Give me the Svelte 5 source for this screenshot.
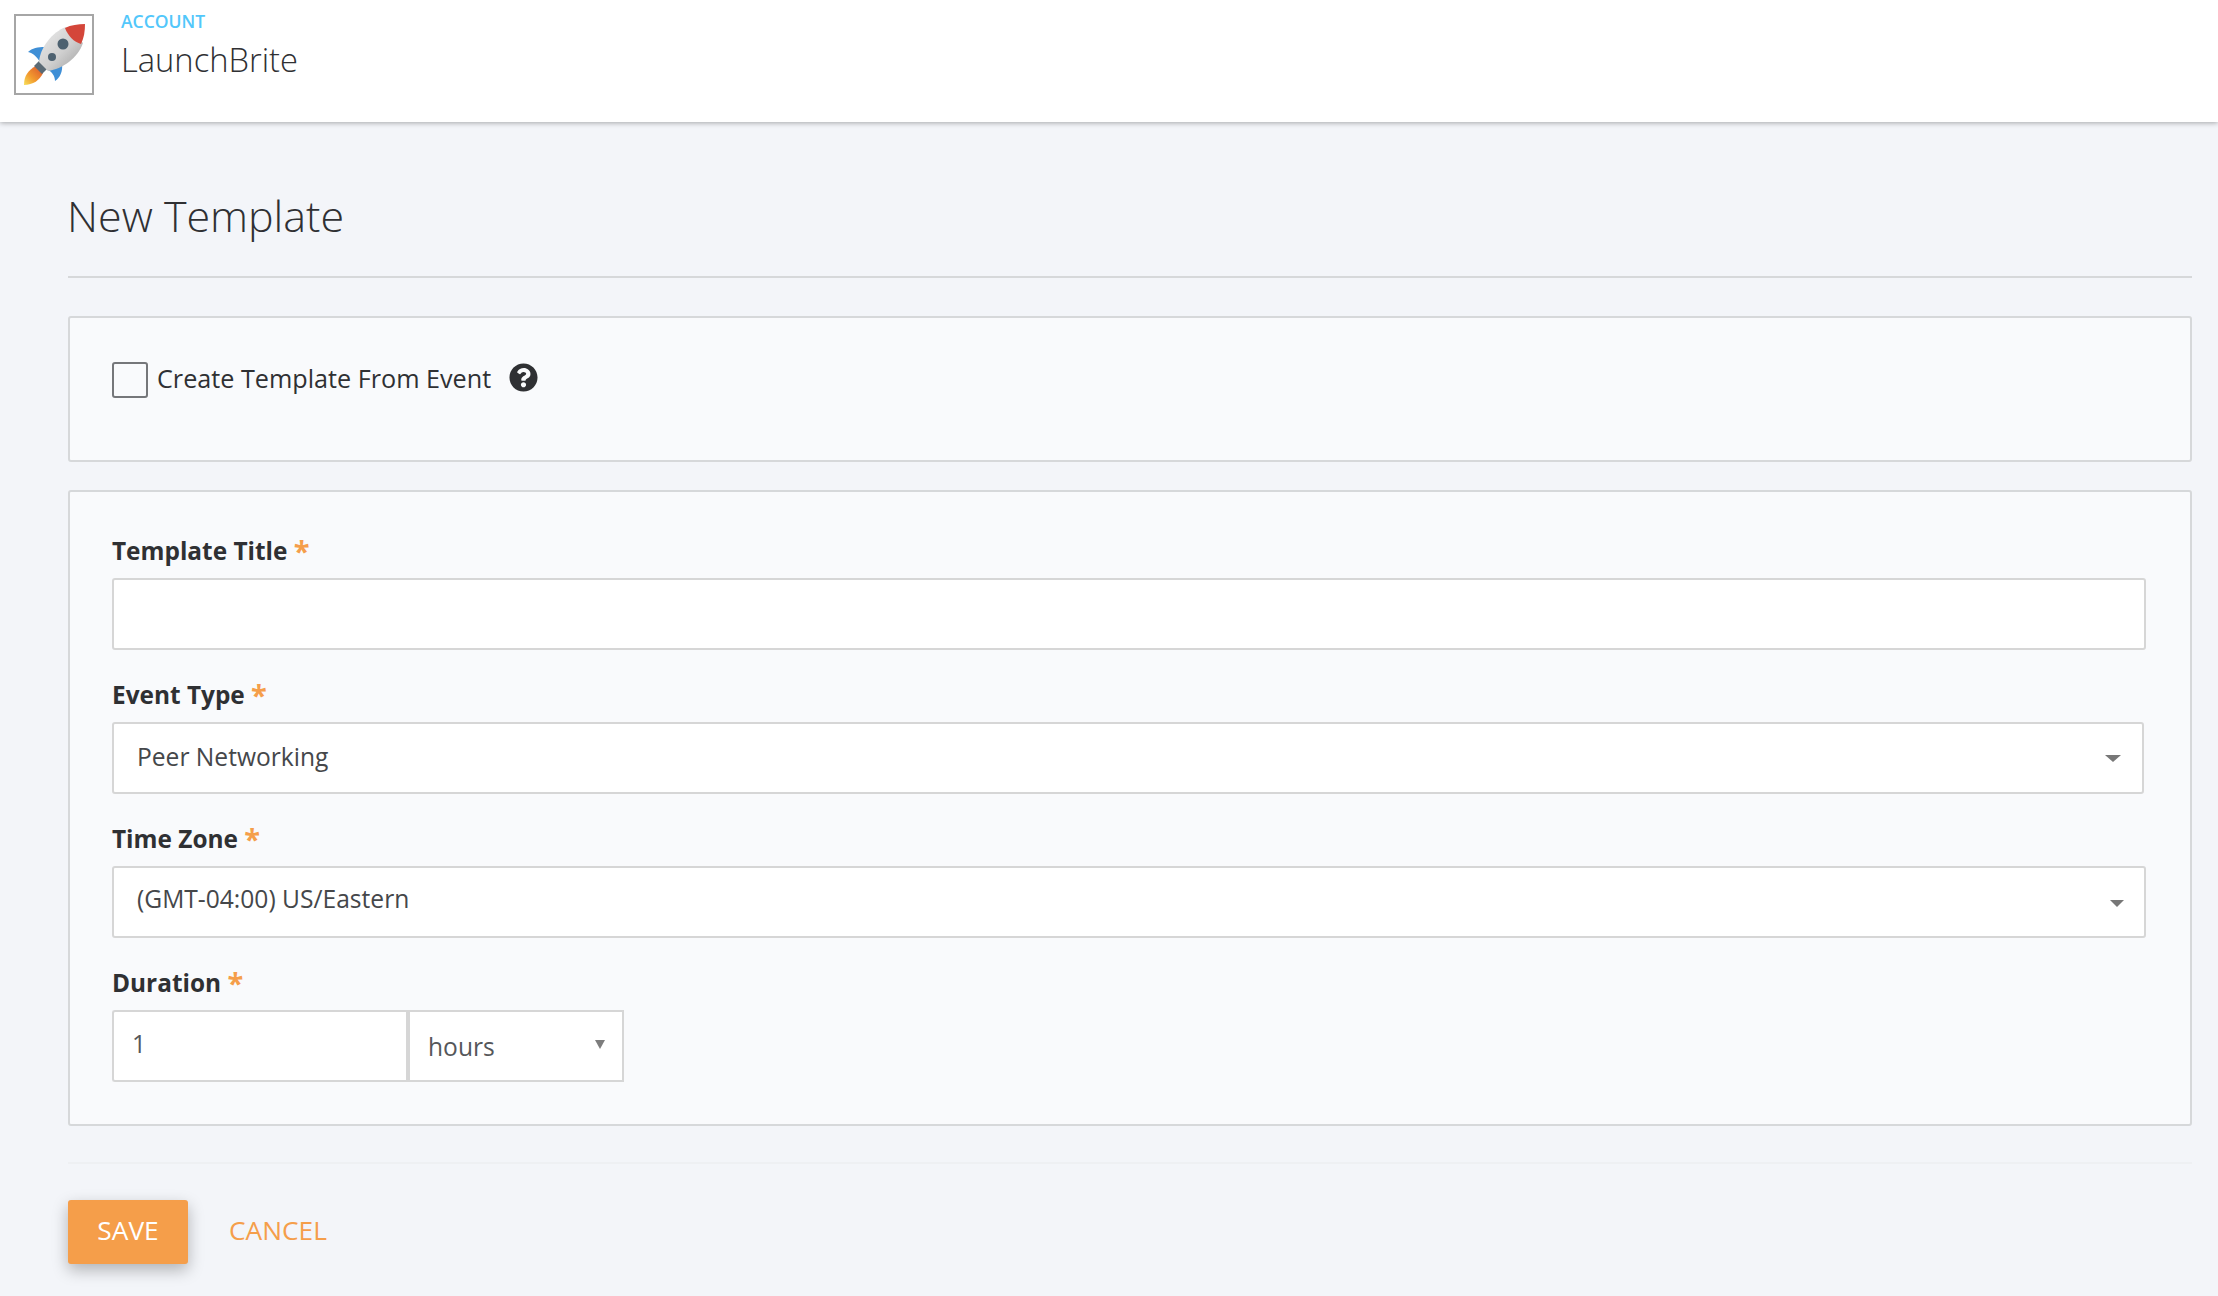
<script>
  const fields = [
    { label: 'Event Type', value: 'Peer Networking', cls: 'event' },
    { label: 'Time Zone', value: '(GMT-04:00) US/Eastern', cls: 'zone' }
  ];
</script>

<header class="top">
  <div class="logo">
    <svg viewBox="0 0 76 77" width="76" height="77" aria-hidden="true">
      <defs>
        <linearGradient id="body" x1="0" y1="0" x2="1" y2="1">
          <stop offset="0" stop-color="#ececec" />
          <stop offset="0.55" stop-color="#cfcfcf" />
          <stop offset="1" stop-color="#9c9c9c" />
        </linearGradient>
        <linearGradient id="flame" x1="1" y1="0" x2="0" y2="1">
          <stop offset="0" stop-color="#d9502e" />
          <stop offset="0.6" stop-color="#f29a2e" />
          <stop offset="1" stop-color="#f7e05a" />
        </linearGradient>
      </defs>
      <path d="M8 69 C8 60 12 54 20 50 L27 57 C24 64 17 69 8 69 Z" fill="url(#flame)" />
      <path d="M12 36 C16 32 22 31 29 31 L24 46 C21 41 17 37 12 36 Z" fill="#3f8fd6" />
      <path d="M39 65 C44 62 47 55 46 48 L32 54 C36 56 39 60 39 65 Z" fill="#3f8fd6" />
      <path d="M18 50 L24 44 L32 52 L26 58 Z" fill="#5a6a75" />
      <path d="M23 46 C24 32 36 16 50 11 L67 27 C62 42 46 53 32 55 Z" fill="url(#body)" />
      <path d="M49 12 C55 9 62 8 69 8 C69 15 68 22 65 28 C58 26 52 20 49 12 Z" fill="#d4463a" />
      <circle cx="47" cy="28" r="5.500" fill="#4d6170" />
      <circle cx="36" cy="41" r="4" fill="#4d6170" />
    </svg>
  </div>
  <div class="crumb">
    <span class="eyebrow">ACCOUNT</span>
    <span class="name">LaunchBrite</span>
  </div>
</header>

<main class="page">
  <h1>New Template</h1>

  <section class="card first">
    <label class="check">
      <span class="box"></span>
      <span class="check-text">Create Template From Event</span>
    </label>
    <svg class="help" viewBox="0 0 512 512" aria-hidden="true">
      <path fill="#2f3033" d="M504 256c0 137-111 248-248 248S8 393 8 256 119 8 256 8s248 111 248 248zM262.700 90c-54.500 0-89.300 23-116.500 63.800-3.500 5.300-2.400 12.400 2.700 16.300l34.700 26.300c5.200 3.900 12.600 3 16.700-2.100 17.900-22.700 30.100-35.800 57.300-35.800 20.400 0 45.700 13.100 45.700 33 0 15-12.400 22.700-32.600 34C247.100 238.500 216 254.900 216 296v4c0 6.600 5.400 12 12 12h56c6.600 0 12-5.400 12-12v-1.300c0-28.500 83.200-29.700 83.200-106.700 0-58-60.200-102-116.500-102zM256 338c-25.400 0-46 20.600-46 46 0 25.400 20.600 46 46 46s46-20.600 46-46c0-25.400-20.600-46-46-46z" />
    </svg>
  </section>

  <section class="card second">
    <div class="field title-field">
      <span class="label">Template Title <em>*</em></span>
      <div class="control"></div>
    </div>

    {#each fields as f}
      <div class="field {f.cls}">
        <span class="label">{f.label} <em>*</em></span>
        <div class="control select">
          <span class="value">{f.value}</span>
          <span class="caret"></span>
        </div>
      </div>
    {/each}

    <div class="field">
      <span class="label">Duration <em>*</em></span>
      <div class="duration">
        <div class="num">1</div>
        <div class="unit">
          <span>hours</span>
          <span class="tri"></span>
        </div>
      </div>
    </div>
  </section>

  <div class="actions">
    <button class="save">SAVE</button>
    <button class="cancel">CANCEL</button>
  </div>
</main>

<style>
  :global(body) {
    margin: 0;
    background: #f3f5f9;
    font-family: "Open Sans", "Noto Sans", sans-serif;
    color: #333538;
  }
  .top {
    height: 122px;
    box-sizing: border-box;
    background: #fff;
    box-shadow: 0 1px 5px rgba(0, 0, 0, 0.32);
    display: flex;
    padding: 14px 0 0 14px;
    position: relative;
  }
  .logo {
    width: 80px;
    height: 81px;
    box-sizing: border-box;
    border: 2px solid #a6a6a6;
  }
  .logo svg { display: block; filter: blur(0.4px); }
  .crumb {
    margin-left: 27px;
    display: flex;
    flex-direction: column;
  }
  .eyebrow {
    font-size: 17.5px;
    line-height: 14px;
    font-weight: 600;
    color: #52c7fb;
  }
  .name {
    font-size: 32.700px;
    line-height: 44px;
    margin-top: 10px;
    font-weight: 300;
    color: #2f3033;
  }
  .page {
    padding: 0 26px 24px 68px;
  }
  h1 {
    margin: 0;
    padding: 67px 0 0;
    height: 156px;
    box-sizing: border-box;
    border-bottom: 2px solid #d6d8da;
    font-size: 43px;
    line-height: 54px;
    font-weight: 300;
    color: #2f3033;
    text-indent: -1px;
  }
  .card {
    background: #f9fafc;
    border: 2px solid #d6d8da;
    border-radius: 3px;
    box-sizing: border-box;
  }
  .first {
    margin-top: 38px;
    height: 146px;
    padding: 44px 0 0 42px;
    display: flex;
    align-items: flex-start;
  }
  .check {
    display: flex;
    align-items: center;
    gap: 9px;
    font-size: 25.200px;
    line-height: 36px;
    color: #2f3033;
  }
  .check-text { margin-top: -4px; }
  .box {
    width: 32px;
    height: 32px;
    border: 2px solid #75777a;
    border-radius: 3px;
  }
  .help {
    width: 29px;
    height: 29px;
    margin: 1px 0 0 18px;
  }
  .second {
    margin-top: 28px;
    height: 636px;
    padding: 37px 44px 0 42px;
  }
  .field + .field { margin-top: 23px; }
  .label {
    display: block;
    font-size: 24.400px;
    line-height: 44px;
    font-weight: 700;
    color: #2f3033;
    margin-bottom: 5px;
  }
  .label em {
    font-style: normal;
    font-size: 29px;
    line-height: 0;
    vertical-align: -2px;
    color: #f59e4a;
    font-weight: 700;
  }
  .control {
    height: 72px;
    box-sizing: border-box;
    background: #fff;
    border: 2px solid #d6d6d6;
    border-radius: 3px;
  }
  .select {
    display: flex;
    align-items: center;
    justify-content: space-between;
    padding: 0 21px 0 23px;
    font-size: 24.600px;
    color: #45474a;
  }
  .event { margin-right: 2px; }
  .event .value { margin-top: -3px; }
  .zone .value { margin-top: -7px; }
  .caret {
    width: 0;
    height: 0;
    border-left: 8px solid transparent;
    border-right: 8px solid transparent;
    border-top: 7px solid #777;
  }
  .zone .caret { margin-top: 3px; margin-right: -1px; border-left-width: 7.500px; border-right-width: 7.500px; }
  .duration {
    display: flex;
    width: 512px;
    height: 72px;
    font-size: 24.600px;
    color: #55575a;
  }
  .num {
    width: 294px;
    box-sizing: border-box;
    background: #fff;
    border: 2px solid #d6d6d6;
    border-right: 0;
    border-radius: 3px 0 0 3px;
    padding: 0 0 6px 18px;
    display: flex;
    align-items: center;
  }
  .unit {
    flex: 1;
    box-sizing: border-box;
    background: #fff;
    border: 2px solid #d6d6d6;
    border-left-width: 4px;
    padding: 1px 17px 0 18px;
    display: flex;
    align-items: center;
    justify-content: space-between;
  }
  .tri {
    width: 0;
    height: 0;
    margin-top: -4px;
    border-left: 5.500px solid transparent;
    border-right: 5.500px solid transparent;
    border-top: 9px solid #7d7d7d;
  }
  .actions {
    margin-top: 36px;
    border-top: 2px solid #eef0f3;
    padding-top: 36px;
    display: flex;
    align-items: center;
  }
  button {
    font-family: inherit;
    font-size: 26.300px;
    border: 0;
    padding: 0 0 5px;
    cursor: pointer;
  }
  .save {
    width: 120px;
    height: 64px;
    background: #f59e4a;
    color: #fff;
    border-radius: 3px;
    box-shadow: 0 6px 16px rgba(0, 0, 0, 0.28);
  }
  .cancel {
    margin-left: 41px;
    background: none;
    color: #f59e4a;
    font-weight: 400;
  }
</style>
